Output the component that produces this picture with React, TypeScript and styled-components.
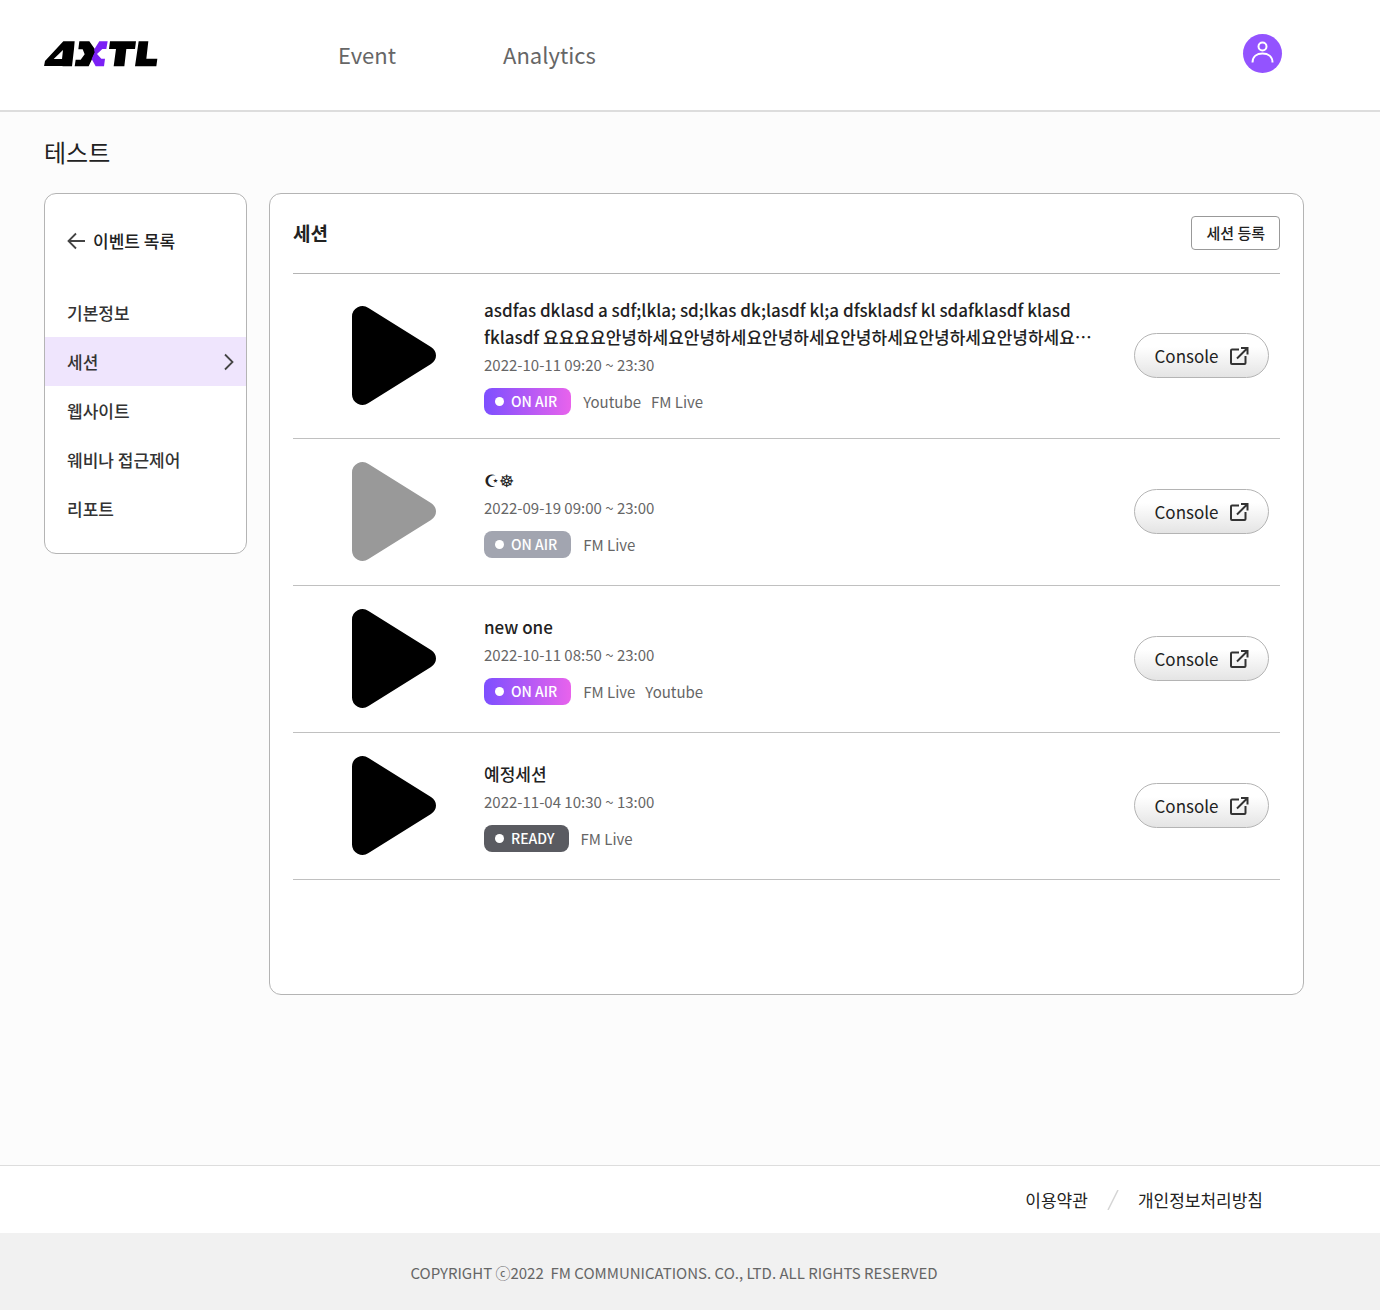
import React from "react";
import styled, { createGlobalStyle, css } from "styled-components";

const GlobalStyle = createGlobalStyle`
  *, *::before, *::after { box-sizing: border-box; }
  body {
    margin: 0;
    background: #fcfcfc;
    color: #222;
    font-family: "Noto Sans CJK KR", "Noto Sans", sans-serif;
    font-size: 17px;
    line-height: 27px;
  }
  h1, h2, h3, p, ul, ol { margin: 0; padding: 0; }
  ul, ol { list-style: none; }
  a { color: inherit; text-decoration: none; }
  button { font-family: inherit; cursor: pointer; }
`;

const Page = styled.div`
  display: flex;
  flex-direction: column;
  min-height: 100vh;
`;

const Header = styled.header`
  display: flex;
  align-items: center;
  height: 112px;
  padding: 0 98px 3px 44px;
  background: #fff;
  border-bottom: 2px solid #ddd;
`;

const LogoLink = styled.a`
  display: block;
  svg { display: block; }
`;

const Nav = styled.nav`
  display: flex;
  flex: 1;
  gap: 107px;
  padding-left: 180px;
`;

const NavLink = styled.a`
  font-size: 22px;
  line-height: 36px;
  color: #666;
`;

const ProfileButton = styled.button`
  display: grid;
  place-items: center;
  width: 39px;
  height: 39px;
  padding: 0;
  border: 0;
  border-radius: 50%;
  background: #9353ff;
`;

const Main = styled.main`
  flex: 1;
  padding: 20px 76px 169px 44px;
`;

const PageTitle = styled.h1`
  font-size: 24px;
  font-weight: 400;
  line-height: 40px;
`;

const Columns = styled.div`
  display: flex;
  align-items: flex-start;
  gap: 22px;
  margin-top: 21px;
`;

const card = css`
  background: #fff;
  border: 1px solid #b4b4b4;
  border-radius: 12px;
`;

const Sidebar = styled.aside`
  ${card}
  flex: 0 0 203px;
  padding: 32px 0 20px;
`;

const BackLink = styled.a`
  display: flex;
  align-items: center;
  gap: 8px;
  padding: 0 22px;
  line-height: 30px;
  font-weight: 500;
`;

const Menu = styled.ul`
  margin-top: 32px;
`;

const MenuLink = styled.a<{ $active?: boolean }>`
  display: flex;
  align-items: center;
  justify-content: space-between;
  height: 49px;
  padding: 0 12px 0 22px;
  font-weight: 500;
  color: #333;
  background: ${(p) => (p.$active ? "#efe5fd" : "transparent")};
`;

const Panel = styled.section`
  ${card}
  flex: 1;
  min-width: 0;
  padding: 0 23px 114px;
`;

const PanelHead = styled.div`
  display: flex;
  align-items: center;
  justify-content: space-between;
  height: 80px;
  padding-bottom: 2px;
  border-bottom: 1px solid #b4b4b4;
`;

const PanelTitle = styled.h2`
  font-size: 19px;
  font-weight: 700;
`;

const AddButton = styled.button`
  height: 34px;
  padding: 0 14px;
  border: 1px solid #999;
  border-radius: 4px;
  background: #fff;
  color: #222;
  font-size: 15px;
  font-weight: 500;
`;

const Session = styled.li`
  display: flex;
  align-items: center;
  padding: 22px 11px 23px 59px;
  border-bottom: 1px solid #c0c0c0;
`;

const Thumb = styled.svg<{ $ended?: boolean }>`
  flex: none;
  width: 84px;
  height: 101px;
  margin-right: 48px;
  fill: ${(p) => (p.$ended ? "#999" : "#000")};
`;

const Info = styled.div`
  flex: 1;
  min-width: 0;
  padding-right: 28px;
`;

const SessionTitle = styled.h3`
  display: -webkit-box;
  -webkit-box-orient: vertical;
  -webkit-line-clamp: 2;
  overflow: hidden;
  font-size: 17px;
  font-weight: 500;
  line-height: 27px;
`;

const SessionTime = styled.p`
  margin-top: 3px;
  font-size: 15px;
  line-height: 24px;
  color: #666;
`;

const Meta = styled.div`
  display: flex;
  align-items: center;
  gap: 12px;
  margin-top: 11px;
`;

type Status = "live" | "ended" | "ready";

const badgeFill: Record<Status, string> = {
  live: "linear-gradient(90deg, #7d4fff, #e863ec)",
  ended: "#a2a5b0",
  ready: "#5a5b61",
};

const Badge = styled.span<{ $status: Status }>`
  display: flex;
  align-items: center;
  gap: 7px;
  height: 27px;
  padding: 0 14px 0 11px;
  border-radius: 8px;
  background: ${(p) => badgeFill[p.$status]};
  color: #fff;
  font-size: 14px;
  font-weight: 500;

  &::before {
    content: "";
    width: 9px;
    height: 9px;
    border-radius: 50%;
    background: #fff;
  }
`;

const Channels = styled.ul`
  display: flex;
  gap: 10px;
  font-size: 15px;
  color: #666;
`;

const ConsoleButton = styled.button`
  display: flex;
  flex: none;
  align-items: center;
  justify-content: center;
  gap: 10px;
  width: 135px;
  height: 45px;
  padding: 0;
  border: 1px solid #b4b4b4;
  border-radius: 23px;
  background: linear-gradient(#fff 30%, #e4e4e4);
  color: #222;
  font-size: 17px;
`;

const Links = styled.div`
  display: flex;
  align-items: center;
  justify-content: flex-end;
  gap: 19px;
  height: 68px;
  padding-right: 117px;
  background: #fff;
  border-top: 1px solid #ddd;
`;

const Copyright = styled.p`
  padding: 26px 76px 24px 44px;
  background: #f1f1f1;
  color: #666;
  font-size: 15px;
  text-align: center;
  white-space: pre-wrap;
`;

const Logo = () => (
  <svg width="114" height="26" viewBox="0 0 342 78" role="img" aria-label="4XTL">
    <path
      d="M0 76L3 60L58 1H92L90 24L84 76H55L56 75H0ZM29 54H54L57 27Z"
      fillRule="evenodd"
    />
    <path d="M106 1H136L156 29L150 42L134 76H92L95 56H110L122 40L116 25H103Z" />
    <path d="M166 1H191L187 24H175L159 39L172 53H183L180 76H155L143 54L152 34L150 26Z" fill="#7b20f5" />
    <path d="M198 1H276L273 24H247L241 76H209L216 24H195Z" />
    <path d="M284 1H313L307 53H340L337 76H273Z" />
  </svg>
);

const sessions: {
  title: string;
  time: string;
  status: Status;
  channels: string[];
}[] = [
  {
    title:
      "asdfas dklasd a sdf;lkla; sd;lkas dk;lasdf kl;a dfskladsf kl sdafklasdf klasd fklasdf 요요요요안녕하세요안녕하세요안녕하세요안녕하세요안녕하세요안녕하세요안녕하세요안녕하세요",
    time: "2022-10-11 09:20 ~ 23:30",
    status: "live",
    channels: ["Youtube", "FM Live"],
  },
  { title: "☪☸", time: "2022-09-19 09:00 ~ 23:00", status: "ended", channels: ["FM Live"] },
  { title: "new one", time: "2022-10-11 08:50 ~ 23:00", status: "live", channels: ["FM Live", "Youtube"] },
  { title: "예정세션", time: "2022-11-04 10:30 ~ 13:00", status: "ready", channels: ["FM Live"] },
];

const menu = ["기본정보", "세션", "웹사이트", "웨비나 접근제어", "리포트"];

export default function App() {
  return (
    <Page>
      <GlobalStyle />
      <Header>
        <LogoLink href="#">
          <Logo />
        </LogoLink>
        <Nav>
          <NavLink href="#event">Event</NavLink>
          <NavLink href="#analytics">Analytics</NavLink>
        </Nav>
        <ProfileButton aria-label="Profile">
          <svg width="39" height="39" viewBox="0 0 39 39" fill="none" stroke="#fff" strokeWidth="2">
            <circle cx="19.5" cy="12.5" r="4" />
            <path d="M9.5 28.5C9.5 22.5 14 19.5 19.5 19.5S29.5 22.5 29.5 28.5" />
          </svg>
        </ProfileButton>
      </Header>
      <Main>
        <PageTitle>테스트</PageTitle>
        <Columns>
          <Sidebar>
            <BackLink href="#list">
              <svg width="18" height="18" viewBox="0 0 18 18" fill="none" stroke="#444" strokeWidth="1.8">
                <path d="M18 9H2M9 1.5L1.5 9L9 16.5" />
              </svg>
              이벤트 목록
            </BackLink>
            <Menu>
              {menu.map((label) => (
                <li key={label}>
                  <MenuLink href="#menu" $active={label === "세션"}>
                    {label}
                    {label === "세션" && (
                      <svg width="10" height="18" viewBox="0 0 10 18" fill="none" stroke="#444" strokeWidth="1.8">
                        <path d="M1 1.5L8.5 9L1 16.5" />
                      </svg>
                    )}
                  </MenuLink>
                </li>
              ))}
            </Menu>
          </Sidebar>
          <Panel>
            <PanelHead>
              <PanelTitle>세션</PanelTitle>
              <AddButton>세션 등록</AddButton>
            </PanelHead>
            <ul>
              {sessions.map((s) => (
                <Session key={s.time}>
                  <Thumb viewBox="0 0 84 100" $ended={s.status === "ended"}>
                    <path d="M0 11A10.500 10.500 0 0 1 16.500 2.500L79 41.500Q84 45 84 50T79 58.500L16.500 97.500A10.500 10.500 0 0 1 0 89Z" />
                  </Thumb>
                  <Info>
                    <SessionTitle>{s.title}</SessionTitle>
                    <SessionTime>{s.time}</SessionTime>
                    <Meta>
                      <Badge $status={s.status}>{s.status === "ready" ? "READY" : "ON AIR"}</Badge>
                      <Channels>
                        {s.channels.map((c) => (
                          <li key={c}>{c}</li>
                        ))}
                      </Channels>
                    </Meta>
                  </Info>
                  <ConsoleButton>
                    Console
                    <svg width="20" height="20" viewBox="0 0 20 20" fill="none" stroke="#333" strokeWidth="2">
                      <path d="M10 3.500H3Q2 3.500 2 4.500V17Q2 18 3 18H15.500Q16.500 18 16.500 17V10M12 2H18.500V8.500M18.500 2L8 12.500" />
                    </svg>
                  </ConsoleButton>
                </Session>
              ))}
            </ul>
          </Panel>
        </Columns>
      </Main>
      <footer>
        <Links>
          <a href="#terms">이용약관</a>
          <svg width="12" height="20" viewBox="0 0 12 20" stroke="#d5d5d5" strokeWidth="1.5">
            <path d="M11 0L1 20" />
          </svg>
          <a href="#privacy">개인정보처리방침</a>
        </Links>
        <Copyright>{"COPYRIGHT ⓒ2022  FM COMMUNICATIONS. CO., LTD. ALL RIGHTS RESERVED"}</Copyright>
      </footer>
    </Page>
  );
}
